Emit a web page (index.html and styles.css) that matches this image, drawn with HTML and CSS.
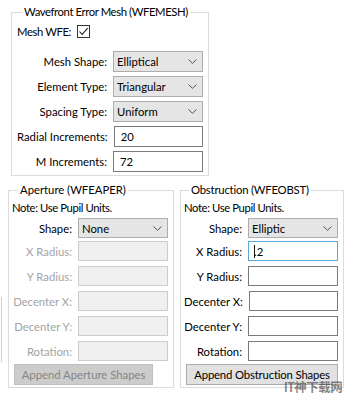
FILE: index.html
```html
<!DOCTYPE html>
<html>
<head>
<meta charset="utf-8">
<link rel="stylesheet" href="styles.css">
</head>
<body>
<fieldset class="group mesh">
  <legend class="tight">Wavefront Error Mesh (WFEMESH)</legend>
  <div class="check-row">
    <span class="tight">Mesh WFE:</span>
    <span class="checkbox"><svg width="11" height="11" viewBox="0 0 11 11"><polyline points="1.5,5.5 4.2,8.4 9.6,2.2" fill="none" stroke="#222" stroke-width="1.1"/></svg></span>
  </div>
  <div class="rows">
    <div class="row"><label>Mesh Shape:</label><div class="field select"><span>Elliptical</span><svg class="chev" width="9" height="5" viewBox="0 0 9 5"><polyline points="0.5,0.5 4.5,4.3 8.5,0.5" fill="none" stroke="#555" stroke-width="1"/></svg></div></div>
    <div class="row"><label>Element Type:</label><div class="field select"><span>Triangular</span><svg class="chev" width="9" height="5" viewBox="0 0 9 5"><polyline points="0.5,0.5 4.5,4.3 8.5,0.5" fill="none" stroke="#555" stroke-width="1"/></svg></div></div>
    <div class="row"><label>Spacing Type:</label><div class="field select"><span>Uniform</span><svg class="chev" width="9" height="5" viewBox="0 0 9 5"><polyline points="0.5,0.5 4.5,4.3 8.5,0.5" fill="none" stroke="#555" stroke-width="1"/></svg></div></div>
    <div class="row"><label>Radial Increments:</label><div class="field input"><span>20</span></div></div>
    <div class="row"><label>M Increments:</label><div class="field input"><span>72</span></div></div>
  </div>
</fieldset>

<div class="lower">
  <fieldset class="group sub aperture">
    <legend>Aperture (WFEAPER)</legend>
    <div class="note">Note: Use Pupil Units.</div>
    <div class="rows sub-rows">
      <div class="row first"><label>Shape:</label><div class="field select"><span>None</span><svg class="chev" width="9" height="5" viewBox="0 0 9 5"><polyline points="0.5,0.5 4.5,4.3 8.5,0.5" fill="none" stroke="#555" stroke-width="1"/></svg></div></div>
      <div class="row off"><label>X Radius:</label><div class="field input"></div></div>
      <div class="row off"><label>Y Radius:</label><div class="field input"></div></div>
      <div class="row off"><label>Decenter X:</label><div class="field input"></div></div>
      <div class="row off"><label>Decenter Y:</label><div class="field input"></div></div>
      <div class="row off"><label>Rotation:</label><div class="field input"></div></div>
    </div>
    <div class="btn-row"><div class="btn btn-ap disabled">Append Aperture Shapes</div></div>
  </fieldset>

  <fieldset class="group sub obstruction">
    <legend class="semi">Obstruction (WFEOBST)</legend>
    <div class="note">Note: Use Pupil Units.</div>
    <div class="rows sub-rows">
      <div class="row first"><label>Shape:</label><div class="field select"><span>Elliptic</span><svg class="chev" width="9" height="5" viewBox="0 0 9 5"><polyline points="0.5,0.5 4.5,4.3 8.5,0.5" fill="none" stroke="#555" stroke-width="1"/></svg></div></div>
      <div class="row"><label>X Radius:</label><div class="field input focus"><span class="caret"></span><span>.2</span></div></div>
      <div class="row"><label>Y Radius:</label><div class="field input"></div></div>
      <div class="row"><label>Decenter X:</label><div class="field input"></div></div>
      <div class="row"><label>Decenter Y:</label><div class="field input"></div></div>
      <div class="row"><label>Rotation:</label><div class="field input"></div></div>
    </div>
    <div class="btn-row"><div class="btn btn-ob">Append Obstruction Shapes</div></div>
  </fieldset>
</div>

<div class="edge-line"></div>
<div class="watermark">IT神下载网</div>
</body>
</html>
```
FILE: styles.css
```css
html, body {
  margin: 0;
  padding: 0;
}
body {
  width: 348px;
  height: 394px;
  background: #ffffff;
  font-family: Lato, "Noto Sans", "Noto Sans CJK SC", sans-serif;
  font-size: 11.3px;
  color: #000;
  position: relative;
  overflow: hidden;
}

.tight {
  letter-spacing: -0.4px;
}
.semi {
  letter-spacing: -0.2px;
}

.group {
  margin: 0;
  padding: 0;
  border: 1px solid #dcdcdc;
  min-width: 0;
}
.group legend {
  padding: 0 2px;
  margin-left: 5px;
  line-height: 16px;
  height: 16px;
}

.mesh {
  margin: 4px 0 0 11px;
  width: 198px;
  box-sizing: border-box;
  padding: 0 5px 3px 5px;
}

.check-row {
  display: flex;
  align-items: center;
  gap: 6px;
  height: 16px;
  margin-top: 3px;
}
.checkbox {
  width: 13px;
  height: 13px;
  box-sizing: border-box;
  border: 1px solid #333;
  background: #fff;
  display: flex;
  align-items: center;
  justify-content: center;
}

.rows {
  display: flex;
  flex-direction: column;
  gap: 4px;
  margin-top: 12px;
}
.row {
  display: flex;
  justify-content: flex-end;
  align-items: center;
  gap: 6px;
  height: 21px;
}
.row label {
  white-space: nowrap;
}
.field {
  width: 90px;
  height: 100%;
  box-sizing: border-box;
  display: flex;
  align-items: center;
  white-space: nowrap;
}
.select {
  background: #e5e5e5;
  border: 1px solid #adadad;
  padding: 0 5px 0 3px;
  justify-content: space-between;
}
.input {
  background: #fff;
  border: 1px solid #7a7a7a;
  padding: 0 6px;
}
.input.focus {
  border-color: #5aa8d6;
  padding-left: 5px;
}
.caret {
  display: inline-block;
  width: 1px;
  height: 13px;
  background: #111;
  margin-right: -1px;
}

.lower {
  display: flex;
  gap: 6px;
  margin: 6px 0 0 8px;
  align-items: flex-start;
}
.sub {
  box-sizing: border-box;
  padding: 0 5px 2px 3px;
  height: 206px;
}
.aperture {
  width: 166px;
}
.aperture legend {
  margin-left: 6px;
}
.obstruction {
  width: 164px;
}
.note {
  line-height: 16px;
  margin-top: 2px;
  letter-spacing: -0.4px;
}
.sub-rows {
  margin-top: 2px;
  gap: 5px;
}
.sub-rows .row {
  height: 20px;
}
.sub-rows .row.first {
  margin-bottom: -2px;
}

.off label {
  color: #a3a3a3;
}
.off .input {
  background: #f0f0f0;
  border-color: #cccccc;
}

.btn-row {
  display: flex;
  margin-top: 3px;
  padding-left: 2px;
}
.btn {
  height: 21px;
  box-sizing: border-box;
  display: flex;
  align-items: center;
  justify-content: center;
  background: #e1e1e1;
  border: 1px solid #adadad;
  white-space: nowrap;
  line-height: 13px;
}
.btn-ap {
  width: 139px;
}
.btn-ob {
  width: 152px;
  letter-spacing: -0.15px;
}
.btn.disabled {
  background: #cccccc;
  border-color: #bfbfbf;
  color: #858585;
}

.edge-line {
  position: absolute;
  left: 1px;
  top: 297px;
  width: 1px;
  height: 65px;
  background: #cfcfcf;
}
.watermark {
  position: absolute;
  left: 284px;
  top: 382px;
  font-size: 12.5px;
  font-weight: bold;
  color: rgba(50, 50, 50, 0.6);
  letter-spacing: -0.5px;
  line-height: 12px;
}
```
